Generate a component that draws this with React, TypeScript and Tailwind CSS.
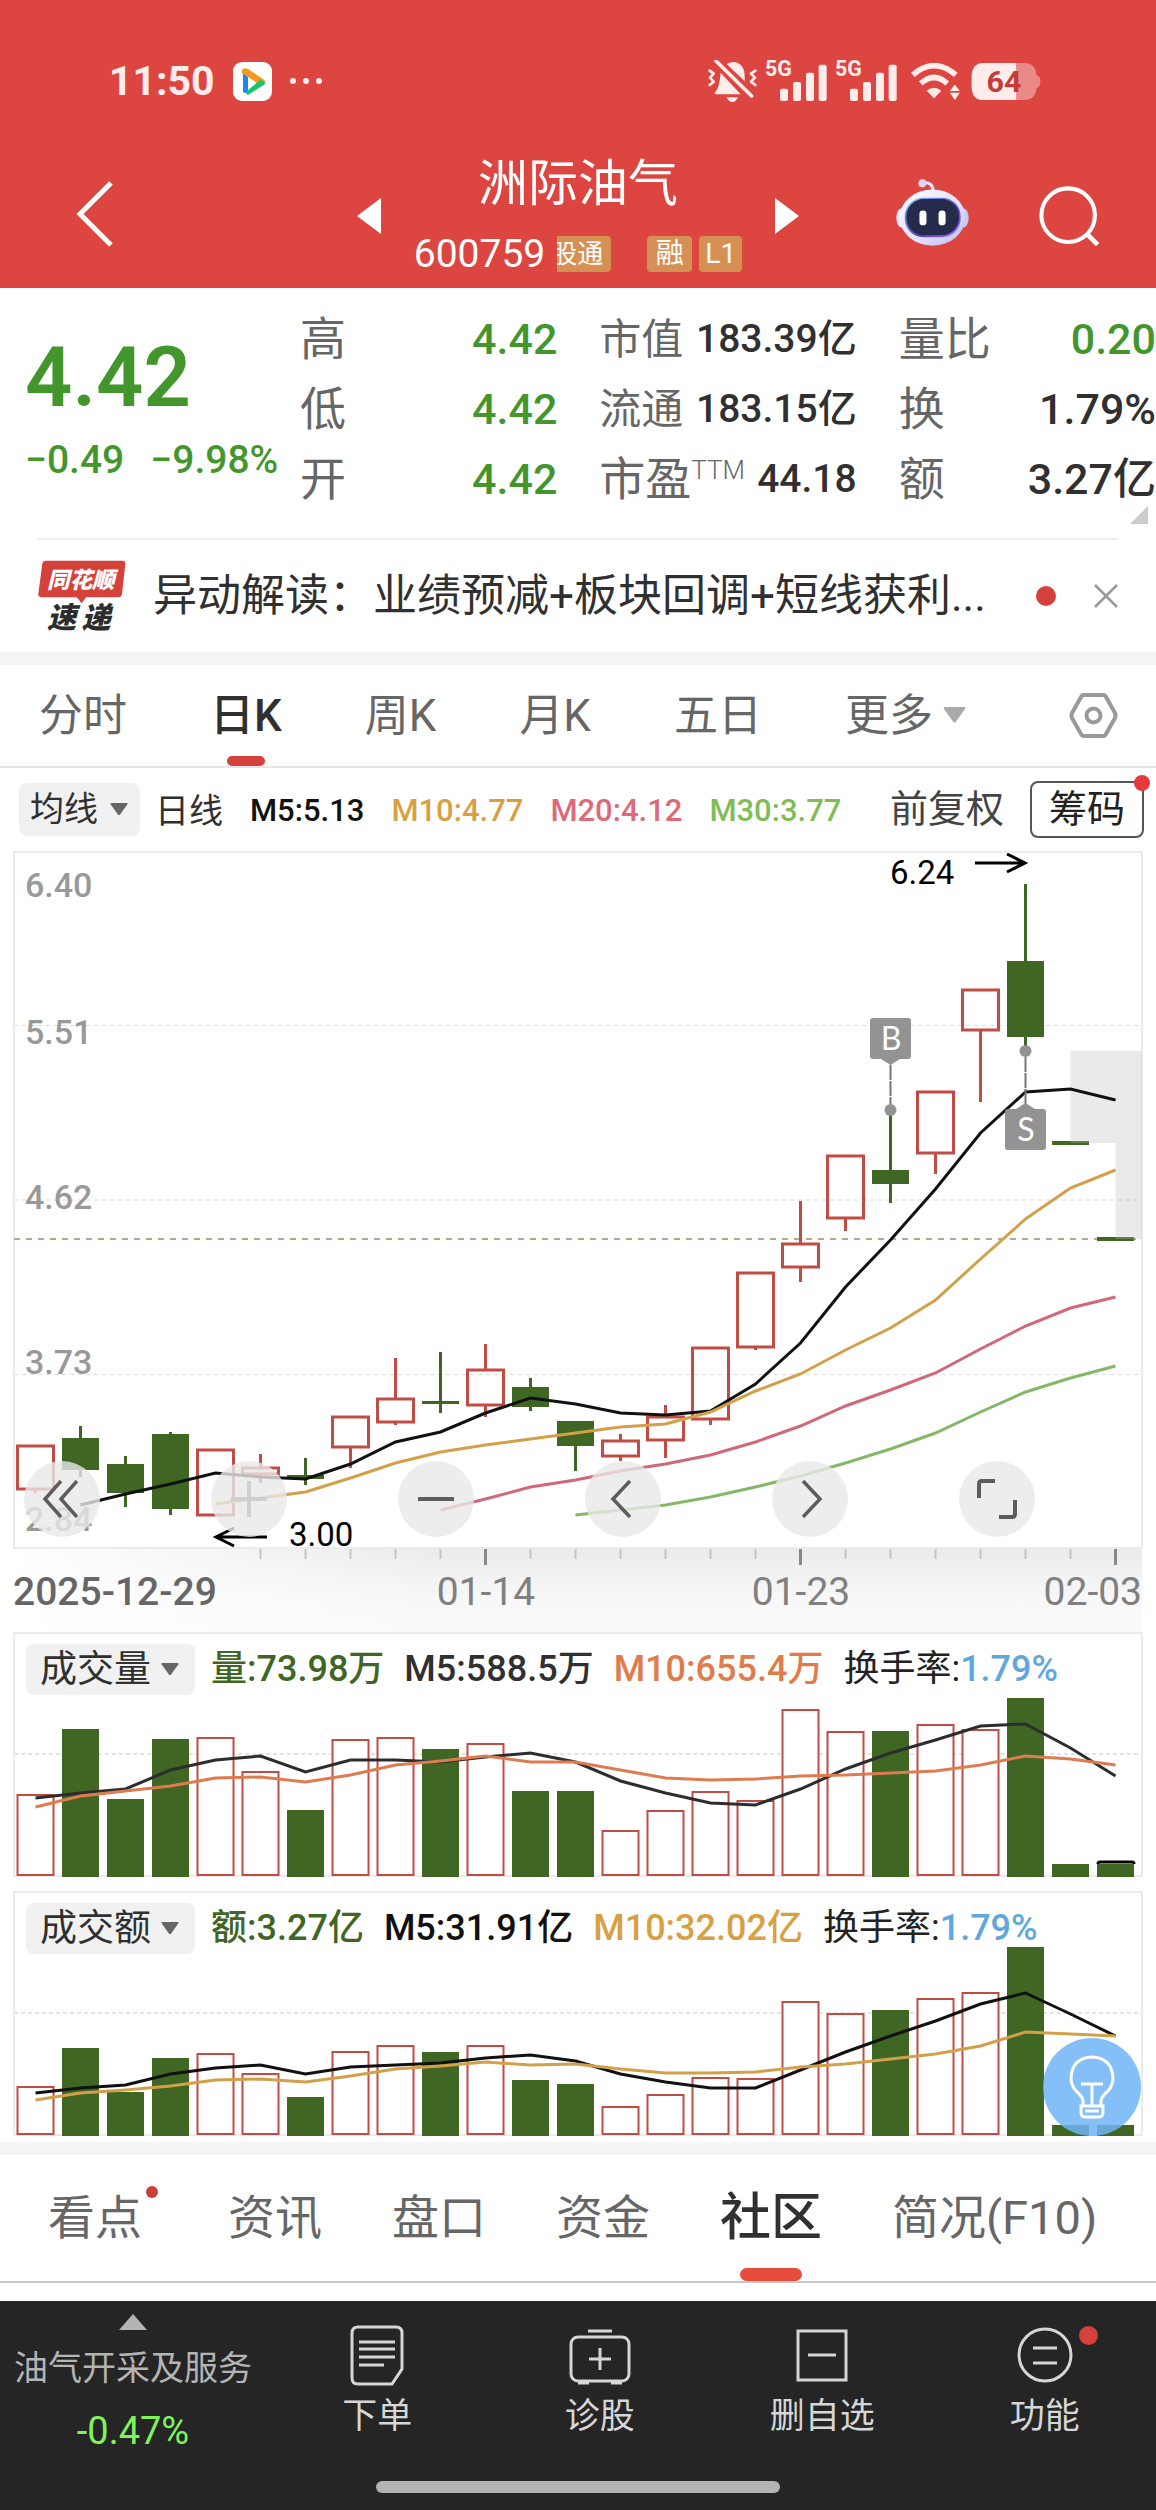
import { useState } from 'react';
import clsx from 'clsx';

type Trend = 'up' | 'down';

// [trend, high, body top, body bottom, low]
const candles: [Trend, number, number, number, number][] = [
  ['up', 596, 596, 639, 643],
  ['down', 576, 588, 620, 627],
  ['down', 606, 614, 643, 657],
  ['down', 582, 584, 659, 665],
  ['up', 600, 600, 665, 665],
  ['up', 604, 618, 624, 633],
  ['down', 608, 625, 629, 635],
  ['up', 567, 567, 597, 618],
  ['up', 508, 549, 572, 575],
  ['down', 502, 551, 554, 563],
  ['up', 494, 520, 555, 567],
  ['down', 528, 537, 557, 561],
  ['down', 571, 571, 596, 621],
  ['up', 584, 591, 606, 611],
  ['up', 555, 567, 590, 608],
  ['up', 498, 498, 569, 575],
  ['up', 423, 423, 497, 500],
  ['up', 351, 394, 417, 432],
  ['up', 306, 306, 368, 381],
  ['down', 259, 320, 334, 353],
  ['up', 242, 242, 303, 324],
  ['up', 140, 140, 180, 252],
  ['down', 34, 111, 187, 201],
  ['down', 291, 291, 295, 295],
  ['down', 387, 387, 391, 391],
];

const averages = [
  { start: 1, color: '#111111', values: [655, 644, 634, 623, 627, 629, 614, 592, 582, 563, 548, 554, 563, 565, 561, 534, 493, 437, 390, 339, 283, 242, 239, 250] },
  { start: 4, color: '#d3a04a', values: [654, 648, 642, 628, 613, 602, 595, 589, 583, 577, 574, 562, 541, 524, 500, 478, 450, 409, 369, 338, 320] },
  { start: 9, color: '#d0687a', values: [660, 649, 637, 630, 621, 614, 605, 592, 576, 556, 540, 523, 499, 476, 458, 447] },
  { start: 12, color: '#84b866', values: [665, 660, 655, 647, 637, 626, 613, 599, 583, 562, 542, 528, 516] },
];

const volume = {
  tops: [163, 97, 167, 107, 106, 140, 178, 108, 106, 117, 112, 159, 159, 199, 179, 160, 169, 78, 100, 99, 93, 98, 66, 232, 232],
  m5: [166, 161, 157, 138, 128, 124, 140, 128, 128, 130, 125, 121, 130, 149, 161, 171, 173, 157, 137, 121, 108, 94, 92, 116, 144],
  m10: [175, 164, 159, 154, 146, 145, 150, 143, 133, 129, 124, 130, 130, 138, 146, 148, 147, 144, 143, 141, 139, 133, 124, 127, 133],
};

const turnover = {
  tops: [196, 157, 201, 167, 163, 183, 206, 161, 155, 161, 155, 189, 193, 216, 204, 187, 188, 111, 123, 119, 108, 102, 56, 234, 234],
  m5: [202, 197, 194, 183, 177, 174, 183, 176, 174, 172, 167, 164, 170, 183, 191, 197, 197, 179, 161, 145, 130, 113, 102, 123, 145],
  m10: [209, 202, 199, 195, 189, 188, 191, 185, 178, 175, 171, 174, 173, 178, 182, 182, 181, 176, 173, 168, 163, 155, 141, 143, 145],
};

const quoteColumns = [
  [
    { label: '高', value: '4.42', down: true },
    { label: '低', value: '4.42', down: true },
    { label: '开', value: '4.42', down: true },
  ],
  [
    { label: '市值', value: '183.39亿' },
    { label: '流通', value: '183.15亿' },
    { label: '市盈', sup: 'TTM', value: '44.18' },
  ],
  [
    { label: '量比', value: '0.20', down: true },
    { label: '换', value: '1.79%' },
    { label: '额', value: '3.27亿' },
  ],
];

const RED = '#c14c45';
const GREEN = '#3f6623';

const cx = (i: number) => 35.5 + i * 45;
const line = (values: number[], start = 0) => values.map((y, i) => `${cx(start + i)},${y}`).join(' ');

function Caret({ className }: { className?: string }) {
  return (
    <svg viewBox="0 0 20 14" className={clsx('pointer-events-none', className)} fill="currentColor" aria-hidden="true">
      <path d="M1 0H19Q20 1 19 2L11 13Q10 14 9 13L1 2Q0 1 1 0Z" />
    </svg>
  );
}

function Signal() {
  return (
    <svg viewBox="0 -18 186 144" className="mb-[6px] h-12 w-[62px]" fill="#ffeceb" aria-hidden="true">
      <text x="0" y="48" fontSize="64" fontWeight="700" fontFamily="Roboto, sans-serif">5G</text>
      <rect x="45" y="86" width="24" height="37" rx="6" />
      <rect x="84" y="66" width="24" height="57" rx="6" />
      <rect x="123" y="38" width="24" height="85" rx="6" />
      <rect x="161" y="14" width="24" height="109" rx="6" />
    </svg>
  );
}

function StatusBar() {
  return (
    <div className="flex h-36 items-center justify-between pt-[18px] pr-[115px] pl-[109px] text-[#ffeceb]">
      <div className="flex items-center gap-[18px]">
        <span className="text-[41px] leading-none font-bold">11:50</span>
        <svg viewBox="0 0 39 39" className="size-[39px]" aria-hidden="true">
          <rect width="39" height="39" rx="9" fill="#fff" />
          <path d="M10 9V30L15 32V15Z" fill="#1d86f0" />
          <path d="M9 8Q11 5 15 7L30 17Q33 19 32 21L27 23L9 11Z" fill="#f59a1c" />
          <path d="M32 20Q32 23 29 24L15 33Q13 33 14 29L27 18Z" fill="#18c46c" />
        </svg>
        <svg viewBox="0 0 32 6" className="w-8" fill="currentColor" aria-hidden="true">
          <circle cx="3" cy="3" r="3" />
          <circle cx="16" cy="3" r="3" />
          <circle cx="29" cy="3" r="3" />
        </svg>
      </div>
      <div className="flex items-center">
        <svg viewBox="0 0 147 126" className="mr-2 h-[42px] w-[49px]" fill="currentColor" aria-hidden="true">
          <path d="M56 12Q72 2 88 8Q110 18 110 48V64Z" />
          <path d="M38 38L98 103H22Q18 100 24 93Q34 82 38 38Z" />
          <path d="M56 112H90Q84 126 73 126Q62 126 56 112Z" />
          <path d="M24 3L131 108" stroke="currentColor" strokeWidth="11" strokeLinecap="round" />
          <path d="M5 32L17 41L6 53L17 65L5 75M142 32L129 41L141 53L129 65L142 75" fill="none" stroke="currentColor" strokeWidth="8" strokeLinecap="round" strokeLinejoin="round" />
        </svg>
        <Signal />
        <span className="w-2" />
        <Signal />
        <svg viewBox="0 0 150 112" className="mr-[11px] ml-[13px] h-[37px] w-[50px]" aria-hidden="true">
          <path d="M8 36Q72 -20 138 36M32 62Q72 26 112 62" fill="none" stroke="currentColor" strokeWidth="17" />
          <path d="M50 84Q72 66 94 84L72 107Z" fill="currentColor" />
          <path d="M120 85L135 65L150 85ZM120 90L135 112L150 90Z" fill="currentColor" />
        </svg>
        <svg viewBox="0 0 208 112" className="h-[37px] w-[70px]" role="img" aria-label="电量 64">
          <path d="M135 0H160Q194 0 196 36Q208 38 208 56Q208 74 196 76Q194 112 160 112H135Z" fill="#ea8a88" />
          <path d="M36 0H135V112H36Q0 112 0 70V42Q0 0 36 0Z" fill="#ffeceb" />
          <text x="98" y="89" textAnchor="middle" fontSize="92" fontWeight="700" fontFamily="Roboto, sans-serif" fill="#c43c37">64</text>
        </svg>
      </div>
    </div>
  );
}

function TitleBar() {
  return (
    <div className="grid h-36 grid-cols-[1fr_auto_1fr] items-center text-white">
      <button aria-label="返回" className="justify-self-start pb-1 pl-[76px]">
        <svg viewBox="0 0 38 66" className="h-[66px] w-[38px]" fill="none" stroke="currentColor" strokeWidth="5">
          <path d="M35 2L4 33L35 64" />
        </svg>
      </button>
      <div className="flex items-center gap-[33px]">
        <button aria-label="上一只">
          <svg viewBox="0 0 24 36" className="h-9 w-6" fill="currentColor"><path d="M24 0V36L0 18Z" /></svg>
        </button>
        <div className="flex flex-col items-center gap-6 pt-1 pb-2">
          <h1 className="text-[50px] leading-[56px]">洲际油气</h1>
          <div className="flex h-9 items-center">
            <span className="mr-3 text-[39px] leading-none">600759</span>
            <span className="mr-9 flex h-9 w-[54px] items-center justify-end overflow-hidden rounded-r-sm bg-[#d79053] pr-2 text-[26px] leading-none whitespace-nowrap">股通</span>
            <span className="mr-[7px] flex h-9 w-[45px] items-center justify-center rounded-sm bg-[#d79053] text-[28px] leading-none">融</span>
            <span className="flex h-9 w-[43px] items-center justify-center rounded-sm bg-[#d79053] text-[28px] leading-none">L1</span>
          </div>
        </div>
        <button aria-label="下一只">
          <svg viewBox="0 0 24 36" className="h-9 w-6" fill="currentColor"><path d="M0 0V36L24 18Z" /></svg>
        </button>
      </div>
      <div className="flex items-center gap-[70px] justify-self-end pr-[57px]">
        <button aria-label="智能助手" className="pb-2">
          <svg viewBox="0 0 216 200" className="h-[67px] w-[73px]">
            <defs>
              <linearGradient id="shell" x1="0" y1="0" x2="1" y2="1">
                <stop offset="0" stopColor="#ffffff" />
                <stop offset="0.6" stopColor="#dfe0fa" />
                <stop offset="1" stopColor="#b9bcec" />
              </linearGradient>
              <linearGradient id="visor" x1="0" y1="0" x2="1" y2="1">
                <stop offset="0" stopColor="#7fc4f5" />
                <stop offset="0.6" stopColor="#5a3fc0" />
                <stop offset="1" stopColor="#b06cf0" />
              </linearGradient>
            </defs>
            <path d="M80 12Q108 8 110 34" fill="none" stroke="#e9e6fb" strokeWidth="9" />
            <circle cx="78" cy="13" r="12" fill="#dcd8f4" />
            <ellipse cx="16" cy="116" rx="16" ry="29" fill="#e8e6fb" />
            <ellipse cx="200" cy="116" rx="16" ry="29" fill="#c9c8f2" />
            <ellipse cx="108" cy="115" rx="98" ry="84" fill="url(#shell)" />
            <rect x="25" y="56" width="167" height="118" rx="56" fill="url(#visor)" />
            <rect x="30" y="60" width="157" height="108" rx="52" fill="#242b4d" />
            <rect x="69" y="94" width="21" height="44" rx="10" fill="#fff" />
            <rect x="126" y="94" width="21" height="44" rx="10" fill="#fff" />
          </svg>
        </button>
        <button aria-label="搜索">
          <svg viewBox="0 0 177 177" className="size-[60px]" fill="none" stroke="currentColor" strokeWidth="12">
            <circle cx="86" cy="86" r="79" />
            <path d="M142 142L173 173" strokeWidth="14" />
          </svg>
        </button>
      </div>
    </div>
  );
}

function Quote() {
  return (
    <section className="relative flex pt-4 pb-6">
      <div className="flex w-[300px] shrink-0 flex-col gap-4 pt-[30px] pl-[25px] text-[#43962c]">
        <strong className="text-[83px] leading-[88px] font-semibold">4.42</strong>
        <div className="flex gap-[26px] text-[39px] leading-[44px] font-medium">
          <span>−0.49</span>
          <span>−9.98%</span>
        </div>
      </div>
      <div className="grid flex-1 grid-cols-3 gap-[42px]">
        {quoteColumns.map((column, i) => (
          <dl key={i}>
            {column.map((row) => (
              <div key={row.label} className="flex h-[70px] items-center justify-between whitespace-nowrap">
                <dt className={clsx('flex text-[#666]', i === 1 && !row.sup ? 'text-[42px]' : 'text-[46px]')}>
                  {row.label}
                  {row.sup && <sup className="top-3 self-start text-[26px] leading-none font-light">{row.sup}</sup>}
                </dt>
                <dd className={clsx('font-medium', i === 1 ? 'text-[39px]' : 'text-[43px]', row.down ? 'text-[#43962c]' : 'text-[#303030]')}>{row.value}</dd>
              </div>
            ))}
          </dl>
        ))}
      </div>
      <svg viewBox="0 0 18 18" className="absolute right-2 bottom-[14px] size-[18px]" fill="#ccc" aria-hidden="true">
        <path d="M18 0V18H0Z" />
      </svg>
    </section>
  );
}

function NewsStrip() {
  const [open, setOpen] = useState(true);
  if (!open) return null;
  return (
    <section className="mx-[38px] flex h-[114px] items-center border-t-2 border-[#eee]">
      <svg viewBox="27 40 265 220" className="mr-[27px] h-[73px] w-[88px] shrink-0" role="img" aria-label="同花顺速递">
        <path d="M50 42H282Q291 43 290 52L280 143Q278 152 270 152H172L158 170L144 152H36Q26 151 28 141L40 50Q42 42 50 42Z" fill="#d4423b" />
        <g fontFamily="'Noto Sans CJK SC', sans-serif" fontWeight="900" fontStyle="italic">
          <text x="54" y="124" fontSize="68" fill="#fff">同花顺</text>
          <text x="54" y="246" fontSize="88" fill="#2d2d2d">速</text>
          <text x="158" y="246" fontSize="88" fill="#2d2d2d">递</text>
        </g>
      </svg>
      <a href="#news" className="min-w-0 flex-1 truncate text-[44px] text-[#303030]">异动解读：业绩预减+板块回调+短线获利...</a>
      <span className="ml-4 size-5 shrink-0 rounded-full bg-[#d4423b]" />
      <button aria-label="关闭" className="ml-[38px] shrink-0" onClick={() => setOpen(false)}>
        <svg viewBox="0 0 24 24" className="size-6" fill="none" stroke="#999" strokeWidth="2.5"><path d="M1 1L23 23M23 1L1 23" /></svg>
      </button>
    </section>
  );
}

function PeriodTabs() {
  const [period, setPeriod] = useState('日K');
  return (
    <nav className="flex h-[103px] items-center justify-between border-b-2 border-[#e6e6e6] pr-[38px] pl-[39px] text-[44px] text-[#666]">
      {['分时', '日K', '周K', '月K', '五日'].map((name) => (
        <button
          key={name}
          onClick={() => setPeriod(name)}
          className={clsx('relative h-full', name === period && 'font-medium text-[#303030]')}
        >
          {name}
          {name === period && <span className="absolute bottom-0 left-1/2 h-[10px] w-[38px] -translate-x-1/2 rounded-full bg-[#d4423b]" />}
        </button>
      ))}
      <button className="flex items-center gap-[10px]">
        更多
        <Caret className="w-[23px] text-[#aaa]" />
      </button>
      <button aria-label="设置" className="ml-5">
        <svg viewBox="0 0 49 45" className="h-[45px] w-[49px]" fill="none" stroke="#999" strokeWidth="4" strokeLinejoin="round">
          <path d="M14 2H35Q36 2 37 4L46 20Q47 22 46 25L37 41Q36 43 35 43H14Q13 43 12 41L3 25Q2 22 3 20L12 4Q13 2 14 2Z" />
          <circle cx="24.5" cy="22.5" r="7" />
        </svg>
      </button>
    </nav>
  );
}

function AverageRow() {
  return (
    <div className="flex h-[82px] items-center pr-3 pl-[19px] text-[31px] whitespace-nowrap">
      <label className="mr-[15px] flex h-[53px] items-center gap-3 rounded-lg bg-[#f1f1f1] pr-3 pl-[11px] text-[34px] text-[#303030]">
        <select aria-label="主图指标" className="appearance-none leading-[44px] outline-none">
          <option>均线</option>
        </select>
        <Caret className="w-[18px] text-[#666]" />
      </label>
      <span className="mr-[27px] pt-1 text-[34px] text-[#303030]">日线</span>
      <div className="flex gap-[27px] pt-1 font-medium">
        <span className="text-[#111]">M5:5.13</span>
        <span className="text-[#d9a043]">M10:4.77</span>
        <span className="text-[#dc6a78]">M20:4.12</span>
        <span className="text-[#7fbd58]">M30:3.77</span>
      </div>
      <button className="ml-auto text-[38px] text-[#444]">前复权</button>
      <button className="relative ml-[26px] flex h-[57px] w-[114px] items-center justify-center rounded-lg border-2 border-[#555] text-[38px] text-[#222]">
        筹码
        <span className="absolute -top-2 -right-2 size-4 rounded-full bg-[#e5393c]" />
      </button>
    </div>
  );
}

function Candle({ index }: { index: number }) {
  const [trend, high, top, bottom, low] = candles[index];
  const x = cx(index);
  if (trend === 'down') {
    return (
      <g fill={GREEN}>
        <rect x={x - 1.5} y={high} width="3" height={low - high} />
        <rect x={x - 18.5} y={top} width="37" height={bottom - top} />
      </g>
    );
  }
  return (
    <g fill="none" stroke={RED} strokeWidth="3">
      <path d={`M${x} ${high}V${top}M${x} ${bottom}V${low}`} />
      <rect x={x - 18} y={top} width="36" height={bottom - top} />
    </g>
  );
}

const round = 'flex size-[76px] items-center justify-center rounded-full bg-[#e8e8e8]/80 text-[#5c5c5c]';

function KLineChart() {
  return (
    <section className="relative">
      <svg viewBox="0 0 1156 782" className="block w-full" fontFamily="Roboto, sans-serif">
        <defs>
          <linearGradient id="shade" x1="0" y1="0" x2="0" y2="1">
            <stop offset="0" stopColor="#ebebeb" />
            <stop offset="0.6" stopColor="#f8f8f8" />
            <stop offset="1" stopColor="#fafafa" />
          </linearGradient>
          <linearGradient id="fade" x1="0" y1="0" x2="1" y2="0">
            <stop offset="0" stopColor="#fff" />
            <stop offset="1" stopColor="#fff" stopOpacity="0" />
          </linearGradient>
        </defs>
        <rect x="14" y="699" width="1128" height="83" fill="url(#shade)" />
        <rect x="14" y="699" width="420" height="83" fill="url(#fade)" />

        <g fill="none" stroke="#dadada" strokeDasharray="4 4">
          <path d="M14 175.5H1142M14 350H1142M14 524.5H1142" />
        </g>
        <rect x="14" y="2" width="1128" height="696" fill="none" stroke="#ebebeb" strokeWidth="2" />

        <g fill="#999" fontSize="34" fontWeight="500">
          <text x="25" y="47">6.40</text>
          <text x="25" y="194">5.51</text>
          <text x="25" y="359">4.62</text>
          <text x="25" y="524">3.73</text>
          <text x="25" y="681">2.84</text>
        </g>
        <path d="M14 389H1142" stroke="#b9a787" strokeWidth="2" strokeDasharray="6 6" />

        {candles.map((_, i) => <Candle key={i} index={i} />)}
        <path d="M1070.500 201H1142V389H1115.500V293H1070.500Z" fill="#bbb" fillOpacity="0.3" />
        {averages.map((ma) => (
          <polyline key={ma.color} points={line(ma.values, ma.start)} fill="none" stroke={ma.color} strokeWidth="3" />
        ))}

        {/* Buy / sell markers */}
        <g fill="#939393">
          <path d="M890.500 215V254M1025.500 207V254" stroke="#777" strokeWidth="2" strokeDasharray="15 1" />
          <circle cx="890.500" cy="260" r="6" />
          <circle cx="1025.500" cy="201" r="6" />
          <rect x="870" y="168" width="41" height="41" rx="3" />
          <path d="M881 209H900L890.500 215Z" />
          <rect x="1005" y="259" width="41" height="41" rx="3" />
          <path d="M1016 259H1035L1025.500 253Z" />
          <g fill="#fff" fontSize="32" textAnchor="middle" fontFamily="Lato, sans-serif">
            <text x="891" y="200">B</text>
            <text x="1026" y="291">S</text>
          </g>
        </g>

        <g stroke="#000" strokeWidth="3" fill="none">
          <path d="M975 13H1025M1007 4L1025 13L1007 22" />
          <path d="M267 687H216M234 678L216 687L234 696" />
        </g>
        <g fontSize="33" fill="#000">
          <text x="890" y="34">6.24</text>
          <text x="289" y="696">3.00</text>
        </g>

        {candles.map((_, i) => i > 4 && (
          <path
            key={i}
            d={i === 10 || i === 17 || i === 24 ? `M${cx(i)} 699V715` : `M${cx(i)} 699V709`}
            stroke={i === 10 || i === 17 || i === 24 ? '#888' : '#c4c4c4'}
            strokeWidth={i === 10 || i === 17 || i === 24 ? 3 : 2}
          />
        ))}
        <g fontSize="39" fill="#808080">
          <text x="13" y="755" fill="#666" fontWeight="500">2025-12-29</text>
          <text x="486" y="755" textAnchor="middle">01-14</text>
          <text x="801" y="755" textAnchor="middle">01-23</text>
          <text x="1142" y="755" textAnchor="end">02-03</text>
        </g>
      </svg>

      <div className="absolute inset-x-0 bottom-[95px] flex justify-between pr-[121px] pl-6">
        <button aria-label="最早" className={round}>
          <svg viewBox="0 0 36 38" className="mr-1 h-[38px] w-9" fill="none" stroke="currentColor" strokeWidth="3.500"><path d="M19 1L3 19L19 37M35 1L19 19L35 37" /></svg>
        </button>
        <button aria-label="放大" className={clsx(round, 'text-[#cfcfcf]!')}>
          <svg viewBox="0 0 36 36" className="size-9" fill="none" stroke="currentColor" strokeWidth="4"><path d="M18 0V36M0 18H36" /></svg>
        </button>
        <button aria-label="缩小" className={round}>
          <svg viewBox="0 0 36 36" className="size-9" fill="none" stroke="currentColor" strokeWidth="4"><path d="M0 18H36" /></svg>
        </button>
        <button aria-label="左移" className={round}>
          <svg viewBox="0 0 22 38" className="mr-1 h-[38px] w-[22px]" fill="none" stroke="currentColor" strokeWidth="3.500"><path d="M20 1L3 19L20 37" /></svg>
        </button>
        <button aria-label="右移" className={round}>
          <svg viewBox="0 0 22 38" className="ml-1 h-[38px] w-[22px]" fill="none" stroke="currentColor" strokeWidth="3.500"><path d="M2 1L19 19L2 37" /></svg>
        </button>
        <button aria-label="全屏" className={round}>
          <svg viewBox="0 0 40 40" className="size-10" fill="none" stroke="currentColor" strokeWidth="4"><path d="M2 19V5Q2 2 5 2H18M38 21V35Q38 38 35 38H22" /></svg>
        </button>
      </div>
    </section>
  );
}

interface BarPanelProps {
  name: string;
  data: typeof volume;
  legend: { text: string; className: string }[];
  colors: [string, string];
  cap?: boolean;
  children?: React.ReactNode;
}

function BarPanel({ name, data, legend, colors, cap, children }: BarPanelProps) {
  return (
    <section className="relative mx-[13px] border-x-2 border-t-2 border-[#ebebeb]">
      <div className="flex h-[61px] items-end gap-5 pl-[11px] text-[36px] whitespace-nowrap">
        <label className="-mr-1 flex h-[51px] items-center gap-[10px] rounded-lg bg-[#f1f1f1] pr-4 pl-[14px] text-[37px] text-[#303030]">
          <select aria-label="副图指标" className="appearance-none leading-[48px] outline-none">
            <option>{name}</option>
          </select>
          <Caret className="w-[18px] text-[#666]" />
        </label>
        {legend.map((item) => (
          <span key={item.text} className={clsx('leading-[51px] font-medium', item.className)}>{item.text}</span>
        ))}
        <span className="leading-[51px] text-[#222]">换手率:<span className="font-medium text-[#5fa8dd]">1.79%</span></span>
      </div>
      <svg viewBox="15 55 1126 190" className="-mt-2 block w-full">
        <path d="M14 122H1142" stroke="#e4e4e4" strokeWidth="2" strokeDasharray="4 3" />
        <path d="M14 244H1142" stroke="#ebebeb" strokeWidth="2" />
        {data.tops.map((y, i) =>
          candles[i][0] === 'up' ? (
            <rect key={i} x={cx(i) - 18} y={y} width="36" height={243 - y} fill="#fff" stroke={RED} strokeWidth="2" />
          ) : (
            <rect key={i} x={cx(i) - 18.5} y={y} width="37" height={245 - y} fill={GREEN} />
          )
        )}
        {cap && <path d="M1098 232Q1098 230 1100 230H1132Q1134 230 1134 232" fill="none" stroke="#000" strokeWidth="3" />}
        <polyline points={line(data.m5)} fill="none" stroke={colors[0]} strokeWidth="3" />
        <polyline points={line(data.m10)} fill="none" stroke={colors[1]} strokeWidth="3" />
      </svg>
      {children}
    </section>
  );
}

function InfoTabs() {
  const [tab, setTab] = useState('社区');
  return (
    <nav className="flex h-32 items-center gap-[70px] border-b-2 border-[#c8c8c8] pl-12 text-[47px] whitespace-nowrap text-[#666]">
      {['看点', '资讯', '盘口', '资金', '社区', '简况(F10)'].map((name) => (
        <button
          key={name}
          onClick={() => setTab(name)}
          className={clsx('relative h-full', name === tab && 'text-[51px] font-medium text-[#303030]', name === '看点' && 'pr-4')}
        >
          {name}
          {name === '看点' && <span className="absolute top-[31px] right-0 size-3 rounded-full bg-[#c9403a]" />}
          {name === tab && <span className="absolute bottom-0 left-1/2 h-[13px] w-[62px] -translate-x-1/2 rounded-full bg-[#e64c3c]" />}
        </button>
      ))}
    </nav>
  );
}

const navItem = 'relative flex flex-1 flex-col items-center gap-2 pt-[22px] text-[35px] leading-[44px]';

function BottomNav() {
  return (
    <footer className="bg-[#252525] pb-[18px] text-[#d6d6d6]">
      <nav className="flex h-[180px]">
        <button className="flex w-[266px] shrink-0 flex-col items-center pt-[13px] text-[34px] text-[#b4b4b4]">
          <svg viewBox="0 0 28 16" className="h-4 w-7" fill="currentColor" aria-hidden="true"><path d="M14 0L28 16H0Z" /></svg>
          <span className="mt-4 leading-[44px]">油气开采及服务</span>
          <span className="mt-[19px] text-[38px] leading-[44px] text-[#7ff45a]">-0.47%</span>
        </button>
        <button className={navItem}>
          <svg viewBox="0 0 54 64" className="h-16 w-[54px]" fill="none" stroke="currentColor" strokeWidth="3">
            <path d="M8 4H46Q52 4 52 10V46L42 61H8Q2 61 2 55V10Q2 4 8 4Z" />
            <path d="M9 19H45M9 26H45M9 34H45M9 42H34" />
          </svg>
          下单
        </button>
        <button className={navItem}>
          <svg viewBox="0 0 62 64" className="h-16 w-[62px]" fill="none" stroke="currentColor" strokeWidth="3">
            <path d="M19 8H43" />
            <rect x="2" y="14" width="58" height="44" rx="7" />
            <path d="M31 25V47M20 36H42M9 60H20M42 60H53" />
          </svg>
          诊股
        </button>
        <button className={navItem}>
          <svg viewBox="0 0 52 64" className="h-16 w-[52px]" fill="none" stroke="currentColor" strokeWidth="3">
            <path d="M2 8H50V57H2ZM12 32H40" />
          </svg>
          删自选
        </button>
        <button className={navItem}>
          <svg viewBox="0 0 56 64" className="h-16 w-14" fill="none" stroke="currentColor" strokeWidth="3">
            <circle cx="28" cy="32" r="26" />
            <path d="M16 25H40M16 40H40" />
          </svg>
          功能
          <span className="absolute top-[25px] right-[58px] size-[19px] rounded-full bg-[#d4423b]" />
        </button>
      </nav>
      <div className="mx-auto h-3 w-[404px] rounded-full bg-[#b3b3b3]" />
    </footer>
  );
}

export default function App() {
  return (
    <div className="bg-white font-[Roboto,'Noto_Sans_CJK_SC',sans-serif]" lang="zh-CN">
      <header className="bg-[#dd4540]">
        <StatusBar />
        <TitleBar />
      </header>
      <Quote />
      <NewsStrip />
      <div className="h-[13px] bg-[#f4f4f4]" />
      <PeriodTabs />
      <AverageRow />
      <KLineChart />
      <BarPanel
        name="成交量"
        data={volume}
        colors={['#2d2d2d', '#dd7c50']}
        cap
        legend={[
          { text: '量:73.98万', className: 'text-[#3f6623]' },
          { text: 'M5:588.5万', className: 'text-[#303030]' },
          { text: 'M10:655.4万', className: 'text-[#e07c4c]' },
        ]}
      />
      <div className="h-[14px]" />
      <BarPanel
        name="成交额"
        data={turnover}
        colors={['#111111', '#d3a04a']}
        legend={[
          { text: '额:3.27亿', className: 'text-[#3f6623]' },
          { text: 'M5:31.91亿', className: 'text-[#111]' },
          { text: 'M10:32.02亿', className: 'text-[#d9a043]' },
        ]}
      >
        <button aria-label="投资提示" className="absolute right-0 bottom-0 flex size-[98px] items-center justify-center rounded-full bg-[#6eb4f7]/85 text-white">
          <svg viewBox="0 0 46 64" className="h-16 w-[46px]" fill="none" stroke="currentColor" strokeWidth="3">
            <path d="M14 50V45Q13 41 8 37Q2 31 2 23Q3 3 23 2Q43 3 44 23Q44 31 38 37Q33 41 32 45V50" />
            <path d="M12 29H34M23 29V50M12 51H34V57Q34 62 30 62H16Q12 62 12 57ZM16 56H30" />
          </svg>
        </button>
      </BarPanel>
      <div className="mt-[6px] h-[13px] bg-[#f4f4f4]" />
      <InfoTabs />
      <div className="h-[18px]" />
      <BottomNav />
    </div>
  );
}
